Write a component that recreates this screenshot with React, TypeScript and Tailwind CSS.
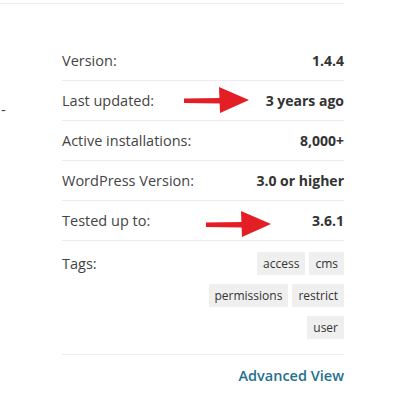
import React from "react";

const rows: [string, string][] = [
  ["Version:", "1.4.4"],
  ["Last updated:", "3 years ago"],
  ["Active installations:", "8,000+"],
  ["WordPress Version:", "3.0 or higher"],
  ["Tested up to:", "3.6.1"],
];

function Arrow({ className }: { className: string }) {
  return (
    <svg className={className} width="68" height="30" viewBox="0 0 68 30">
      <path d="M1 12.5 L38 12 L38 17.5 L1 17 Z" fill="#e31e24" />
      <path d="M36 1 L66 14 L37 27 Z" fill="#e31e24" />
    </svg>
  );
}

export default function App() {
  return (
    <div
      className="relative w-[409px] h-[402px] bg-white text-[#444]"
      style={{ fontFamily: '"Open Sans", sans-serif' }}
    >
      <div className="w-[344px] pt-[3px]">
        <div className="h-px bg-[#ececec]" />
        <div className="flex">
          <div className="w-[62px] pt-[98px]">
            <span className="block pl-[1px] text-[15px] leading-none text-[#444]">-</span>
          </div>
          <div className="flex-1 pt-[37px]">
            {rows.map(([k, v]) => (
              <div
                key={k}
                className="flex h-[40px] items-center justify-between border-b border-[#ececec]"
              >
                <span className="text-[14.5px]">{k}</span>
                <span className="text-[14px] font-bold text-[#333]">{v}</span>
              </div>
            ))}
            <div className="flex justify-between border-b border-[#ececec] pt-[11px] pb-[15px]">
              <span className="text-[14.5px] leading-[23px]">Tags:</span>
              <div className="flex w-[140px] flex-wrap justify-end gap-x-[4px] gap-y-[9px]">
                {["access", "cms", "permissions", "restrict", "user"].map((t) => (
                  <span
                    key={t}
                    className="h-[23px] bg-[#efefef] px-[6px] text-[12px] leading-[23px] text-[#333]"
                  >
                    {t}
                  </span>
                ))}
              </div>
            </div>
            <div className="flex justify-end pt-[10px]">
              <span className="text-[14.5px] font-semibold text-[#24708f]">Advanced View</span>
            </div>
          </div>
        </div>
      </div>
      <Arrow className="absolute left-[183px] top-[86px]" />
      <Arrow className="absolute left-[205px] top-[210px]" />
    </div>
  );
}
